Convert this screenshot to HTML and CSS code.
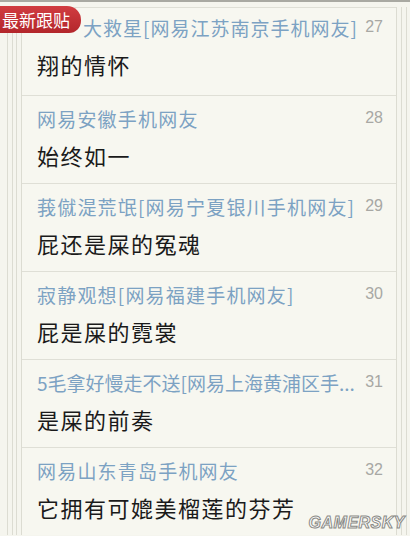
FILE: index.html
```
<!DOCTYPE html>
<html lang="zh-CN">
<head>
<meta charset="utf-8">
<link rel="stylesheet" href="styles.css">
</head>
<body>
<div class="topbar"></div>
<div class="frame">
  <div class="rail rail-1">
    <div class="rail rail-2">
      <div class="rail rail-3">
        <div class="list">
          <div class="floor floor-first">
            <div class="meta"><span class="name name-first">大救星[网易江苏南京手机网友]</span><span class="num">27</span></div>
            <div class="text">翔的情怀</div>
          </div>
          <div class="floor">
            <div class="meta"><span class="name">网易安徽手机网友</span><span class="num">28</span></div>
            <div class="text">始终如一</div>
          </div>
          <div class="floor">
            <div class="meta"><span class="name">莪僦湜荒氓[网易宁夏银川手机网友]</span><span class="num">29</span></div>
            <div class="text">屁还是屎的冤魂</div>
          </div>
          <div class="floor">
            <div class="meta"><span class="name">寂静观想[网易福建手机网友]</span><span class="num">30</span></div>
            <div class="text">屁是屎的霓裳</div>
          </div>
          <div class="floor">
            <div class="meta"><span class="name name-tight">5毛拿好慢走不送[网易上海黄浦区手...</span><span class="num">31</span></div>
            <div class="text">是屎的前奏</div>
          </div>
          <div class="floor">
            <div class="meta"><span class="name">网易山东青岛手机网友</span><span class="num">32</span></div>
            <div class="text">它拥有可媲美榴莲的芬芳</div>
          </div>
        </div>
      </div>
    </div>
  </div>
</div>
<div class="badge">最新跟贴</div>
<div class="watermark">GAMERSKY</div>
</body>
</html>
```
FILE: styles.css
```
html, body {
  margin: 0;
  padding: 0;
}
body {
  width: 410px;
  height: 536px;
  overflow: hidden;
  background: #f5f5ee;
  font-family: "Noto Sans CJK SC", "Noto Sans", sans-serif;
  position: relative;
}
.topbar {
  height: 2px;
  background: #a9a9a2;
}
.frame {
  padding: 0 3px 0 7px;
}
.rail {
  border-left: 1px solid #dcdcd2;
}
.rail-1 {
  padding-left: 4px;
  padding-right: 4px;
  border-right: 1px solid #dcdcd2;
}
.rail-2 {
  padding-left: 3px;
  padding-right: 4px;
  border-right: 1px solid #dcdcd2;
}
.rail-3 {
  padding-left: 4px;
}
.list {
  margin-top: 5px;
  border-left: 1px solid #dcdcd2;
  border-right: 1px solid #dcdcd2;
  background: #f7f7f0;
}
.floor {
  height: 88px;
  box-sizing: border-box;
  border-top: 1px solid #dfdfd6;
  padding: 9px 13px 0 15px;
}
.floor-first {
  padding-top: 6px;
}
.meta {
  display: flex;
  align-items: center;
  gap: 6px;
  height: 26px;
}
.name {
  flex: 1;
  color: #7ca2c3;
  font-size: 19px;
  letter-spacing: 1.2px;
  white-space: nowrap;
  overflow: hidden;
}
.name-first {
  padding-left: 46px;
  letter-spacing: 1px;
}
.name-tight {
  letter-spacing: 0;
}
.num {
  color: #a8a8a4;
  font-family: "Liberation Sans", Arial, sans-serif;
  font-size: 16px;
}
.text {
  margin-top: 9px;
  color: #1a1a1a;
  font-size: 22px;
  letter-spacing: 1.5px;
  line-height: 30px;
}
.badge {
  position: absolute;
  left: 0;
  top: 6px;
  width: 72px;
  height: 27px;
  padding-left: 2px;
  padding-right: 7px;
  background: linear-gradient(#d13d41, #b3262b);
  color: #fff;
  font-size: 17px;
  line-height: 27px;
  border-radius: 0 14px 12px 0;
  white-space: nowrap;
}
.watermark {
  position: absolute;
  right: 5px;
  bottom: 4px;
  font-family: "Liberation Sans", Arial, sans-serif;
  font-weight: bold;
  font-style: italic;
  font-size: 16px;
  letter-spacing: 0.5px;
  color: #ffffff;
  -webkit-text-stroke: 1px #8a8a86;
}
```
